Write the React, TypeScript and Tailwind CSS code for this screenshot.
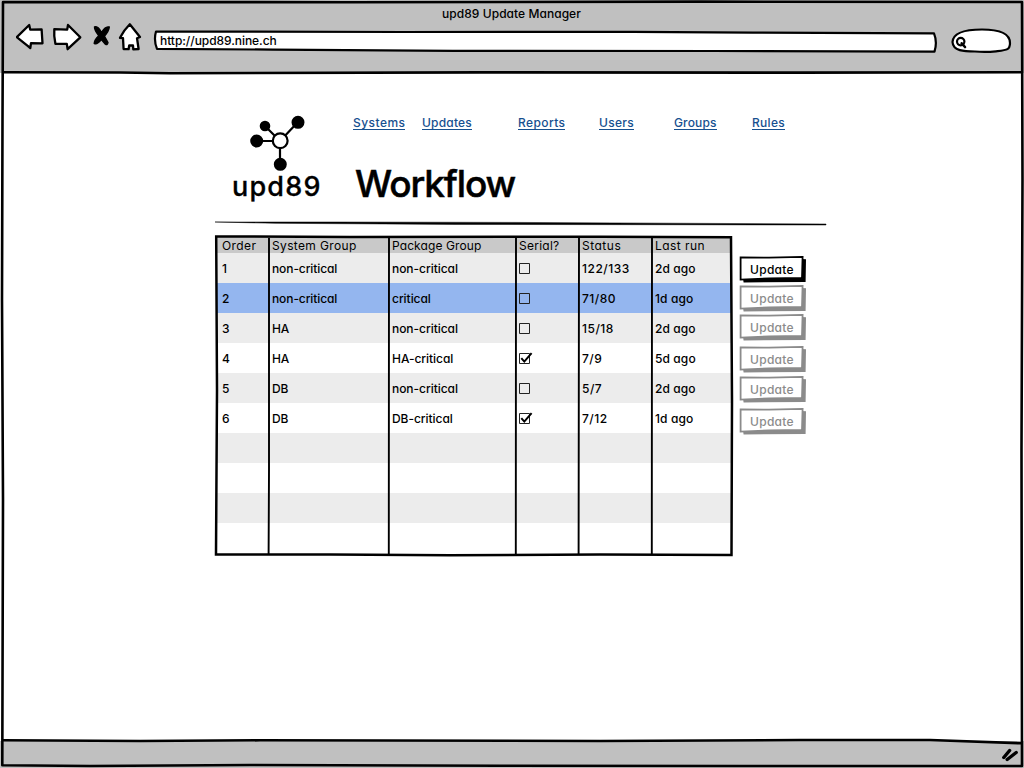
import React from "react";

type Row = {
  order: string;
  system: string;
  pkg: string;
  serial: boolean;
  status: string;
  last: string;
};

const rows: Row[] = [
  { order: "1", system: "non-critical", pkg: "non-critical", serial: false, status: "122/133", last: "2d ago" },
  { order: "2", system: "non-critical", pkg: "critical", serial: false, status: "71/80", last: "1d ago" },
  { order: "3", system: "HA", pkg: "non-critical", serial: false, status: "15/18", last: "2d ago" },
  { order: "4", system: "HA", pkg: "HA-critical", serial: true, status: "7/9", last: "5d ago" },
  { order: "5", system: "DB", pkg: "non-critical", serial: false, status: "5/7", last: "2d ago" },
  { order: "6", system: "DB", pkg: "DB-critical", serial: true, status: "7/12", last: "1d ago" },
];

const columns = "grid grid-cols-[53px_120px_127px_63px_73px_80px]";

const links = [
  { label: "Systems", style: "w-[69px] tracking-[0.45px]" },
  { label: "Updates", style: "w-24 tracking-[0.2px]" },
  { label: "Reports", style: "w-[81px] tracking-[0.4px]" },
  { label: "Users", style: "w-[75px] tracking-[0.3px]" },
  { label: "Groups", style: "w-[78px] tracking-[0.15px]" },
  { label: "Rules", style: "w-[60px] tracking-[0.3px]" },
];

const buttons = [
  { active: true, style: "" },
  { active: false, style: "mt-[1px]" },
  { active: false, style: "mt-[1px]" },
  { active: false, style: "mt-1" },
  { active: false, style: "mt-[2px]" },
  { active: false, style: "mt-1" },
];

function BrowserIcons() {
  return (
    <svg className="ml-4 mt-[1px] block" width="126" height="30" viewBox="16 22 126 30" fill="#fff" stroke="#000" strokeWidth="2.3" strokeLinejoin="round" strokeLinecap="round">
      <path d="M16.8 37.2 L29.2 25 L30.2 29.6 L41.6 29.3 L42.5 43.3 L31 43.2 L30.3 48 Q22 41.5 16.8 37.2Z" />
      <path d="M54.3 29.2 L67.2 29.6 L68 25 L80.3 37.3 L67.6 49.2 L66.8 43.8 L55.4 43.8 Q53.7 36 54.3 29.2Z" />
      <path d="M94.5 26.8 Q98 25.5 101.5 32.5 Q105 26 109.3 27 Q109 31 104.4 36.2 L108 42.5 Q107.5 45.5 105.4 44.2 L101.3 39.5 Q97 45 94.2 43.3 Q94.5 39.5 98.8 35.8 Q94.3 30 94.5 26.8Z" fill="#000" strokeWidth="1.4" />
      <path d="M129.8 24.3 L140 37 L137 38.2 L138.6 49 L133.3 49.3 L133 45.5 L129.2 45.5 L128.6 49.2 L123.6 49 L123 38.2 L120 37.8 Q124 30 129.8 24.3Z" />
    </svg>
  );
}

function Frame() {
  return (
    <svg className="pointer-events-none absolute inset-0" width="1024" height="768" fill="none" stroke="#000" strokeWidth="2.6" strokeLinejoin="round">
      <path d="M3 2 L350 2.2 L700 1.6 L1022 2 L1022.5 180 L1021.5 450 L1022 766 L740 766 L500 765.8 L250 765 L90 766 L2.3 765.3 L3 500 L2 300 L2.5 120Z" />
      <path d="M3 72.3 L120 72.5 L170 73.3 L480 72.4 L800 72.6 L1022 72.2" />
      <path d="M3 740.3 L140 741 L260 740.3 L600 741 L800 740 L930 740 L1022 743.3" />
      <path d="M1003.8 757.5 L1009.6 750.5 M1007.2 759.5 L1016.2 752.5" strokeWidth="3.4" strokeLinecap="round" />
    </svg>
  );
}

function Logo() {
  return (
    <svg className="block" width="56" height="57" viewBox="250 115 56 57" stroke="#000" strokeWidth="2.2">
      <path d="M280 141 L265 126 M280 141 L298 122 M280 141 H257 M280 141 V164" />
      <circle cx="265" cy="126" r="4.2" />
      <circle cx="298" cy="122.3" r="5.4" />
      <circle cx="256.7" cy="141" r="5.4" />
      <circle cx="280.3" cy="164.3" r="5.4" />
      <circle cx="280.2" cy="140.8" r="7.4" fill="#fff" />
    </svg>
  );
}

function Check({ on }: { on: boolean }) {
  return (
    <svg className="mt-[1px] block" width="14" height="13" viewBox="0 0 14 13" fill="none" stroke="#000">
      <path d="M.5 1.5 H10.5 V11.5 H.5Z" strokeWidth="1" stroke="#222" />
      {on && <path d="M2.3 6.2 L5.3 9.6 L12.6 1.2" strokeWidth="2" />}
    </svg>
  );
}

function UpdateButton({ active, style }: { active: boolean; style: string }) {
  const color = active ? "#000" : "#8b8b8b";
  return (
    <button className={`relative block h-7 w-[68px] text-left ${style}`}>
      <svg className="absolute inset-0" width="68" height="28" fill="none" stroke={color}>
        <path d="M4 22.5 H63 V3 L67 3.2 L66.6 25.9 L4.6 26.4 Z" fill={color} stroke="none" />
        <path d="M1.6 1.4 L30 1.6 L63.6 .9 L63 22 L30 22.4 L1.6 23.6Z" fill="#fff" strokeWidth="1.8" />
      </svg>
      <span className={`relative block pl-[11px] text-[12px] font-medium leading-[22px] tracking-[0.3px] ${active ? "text-black" : "text-[#8b8b8b]"}`}>Update</span>
    </button>
  );
}

function TableLines() {
  return (
    <svg className="pointer-events-none absolute -left-1 -top-1" width="526" height="328" viewBox="212 232 526 328" fill="none" stroke="#000" strokeWidth="2.5">
      <path d="M216.2 236.4 L350 237 L600 236.8 L731 237.2 L732 400 L731.5 555 L600 554.4 L450 555.2 L330 554.5 L216 554.6 L217 390Z" />
      <path d="M269 238 V470 L268.6 555 M389 238 L388.8 555 M516 238 L515.8 555 M579 238 L578.6 555 M652 238 L651.8 555" strokeWidth="1.9" />
    </svg>
  );
}

export default function App() {
  return (
    <div className="relative flex h-[768px] w-[1024px] flex-col overflow-hidden bg-white font-['Inter','Liberation_Sans',sans-serif] text-[12px] text-black [font-feature-settings:'cv11']">
      <header className="h-[73px] shrink-0 bg-[#c0c0c0]">
        <div className="pt-[6px] pr-[1px] text-center font-medium leading-[15px] tracking-[0.05px]">upd89 Update Manager</div>
        <div className="flex">
          <BrowserIcons />
          <div className="relative ml-[11px] mt-[9px] h-6 w-[785px]">
            <svg className="absolute inset-0" width="785" height="24" fill="#fff" stroke="#000" strokeWidth="2.2" strokeLinejoin="round">
              <path d="M3 1.5 L250 2 L480 1.8 L600 2.6 L781 3.4 Q784.5 12 781.5 21.6 L560 21 L300 20.8 L120 19.6 L4 18.8 Q.5 10 3 1.5Z" />
            </svg>
            <div className="relative pl-[7px] text-[12px] font-medium leading-[22px] tracking-[-0.05px]">http://upd89.nine.ch</div>
          </div>
          <svg className="ml-3 mt-[6px] block" width="62" height="28" viewBox="950 27 62 28" fill="#fff" stroke="#000" strokeWidth="2.2" strokeLinecap="round">
            <path d="M952.5 42 C953 33 966 29.5 982 29.5 C1000 29.5 1010 33 1010 43 C1010 50 1007 50 996 51.3 Q985 52.5 975 51.5 C964 51.5 953 51 952.5 42Z" />
            <circle cx="960.7" cy="41.6" r="3.7" />
            <path d="M961.7 43.3 L965 47" strokeWidth="2.6" />
          </svg>
        </div>
      </header>

      <main className="min-h-0 flex-1 pl-[215px]">
        <section className="flex h-[148px]">
          <div className="w-[138px] pl-[17px] pt-[42px]">
            <div className="pl-[18px]"><Logo /></div>
            <div className="-mt-[1px] text-[27px] font-medium leading-[31px] tracking-[1.2px] [-webkit-text-stroke:0.3px_#000]">upd89</div>
          </div>
          <div className="pt-10">
            <nav className="flex text-[12px] leading-[20px] text-[#17508f]">
              {links.map((l) => (
                <div key={l.label} className={`h-[18px] ${l.style}`}>
                  <a className="block h-[17px] w-fit border-b border-[#17508f] font-medium" href="#">{l.label}</a>
                </div>
              ))}
            </nav>
            <h1 className="pl-[2px] pt-[28px] text-[37px] font-medium leading-[49px] tracking-[-1.1px] [-webkit-text-stroke:0.5px_#000]">Workflow</h1>
          </div>
        </section>
        <svg className="block" width="612" height="6" fill="none" stroke="#000">
          <path d="M0 1 L120 1 L300 1.4 L611 3 V4 L240 3.4 L60 2.3Z" fill="#000" strokeWidth=".5" />
        </svg>
        <section className="flex pt-[9px]">
          <div className="relative ml-[1px] h-[320px] w-[516px] pt-[1px]">
            <div className={`${columns} h-4 bg-[#c9c9c9] font-normal leading-[17px]`}>
              <span className="pl-[6px] tracking-[0.4px]">Order</span>
              <span className="pl-[3px] tracking-[0.35px]">System Group</span>
              <span className="pl-[3px] tracking-[0.1px]">Package Group</span>
              <span className="pl-[3px] tracking-[0.25px]">Serial?</span>
              <span className="pl-[3px] tracking-[0.5px]">Status</span>
              <span className="pl-[3px] tracking-[0.45px]">Last run</span>
            </div>
            {rows.map((r, i) => (
              <div key={r.order} className={`${columns} h-[30px] items-center font-medium ${i === 1 ? "bg-[#94b6ef]" : i % 2 === 0 ? "bg-[#ececec]" : "bg-white"}`}>
                <span className="pl-[6px] pt-[1px]">{r.order}</span>
                <span className="pl-[3px] pt-[1px] tracking-[-0.1px]">{r.system}</span>
                <span className="pl-[3px] pt-[1px] tracking-[-0.05px]">{r.pkg}</span>
                <span className="pl-[3px]"><Check on={r.serial} /></span>
                <span className="pl-[3px] pt-[1px] tracking-[0.5px]">{r.status}</span>
                <span className="pl-[3px] pt-[1px] tracking-[0.1px]">{r.last}</span>
              </div>
            ))}
            <div className="h-[30px] bg-[#ececec]" />
            <div className="h-[30px]" />
            <div className="h-[30px] bg-[#ececec]" />
            <div className="h-[30px]" />
            <TableLines />
          </div>
          <div className="ml-[7px] pt-5">
            {buttons.map((b, i) => <UpdateButton key={i} active={b.active} style={b.style} />)}
          </div>
        </section>
      </main>

      <footer className="h-[27px] shrink-0 bg-[#c0c0c0]" />
      <Frame />
    </div>
  );
}
